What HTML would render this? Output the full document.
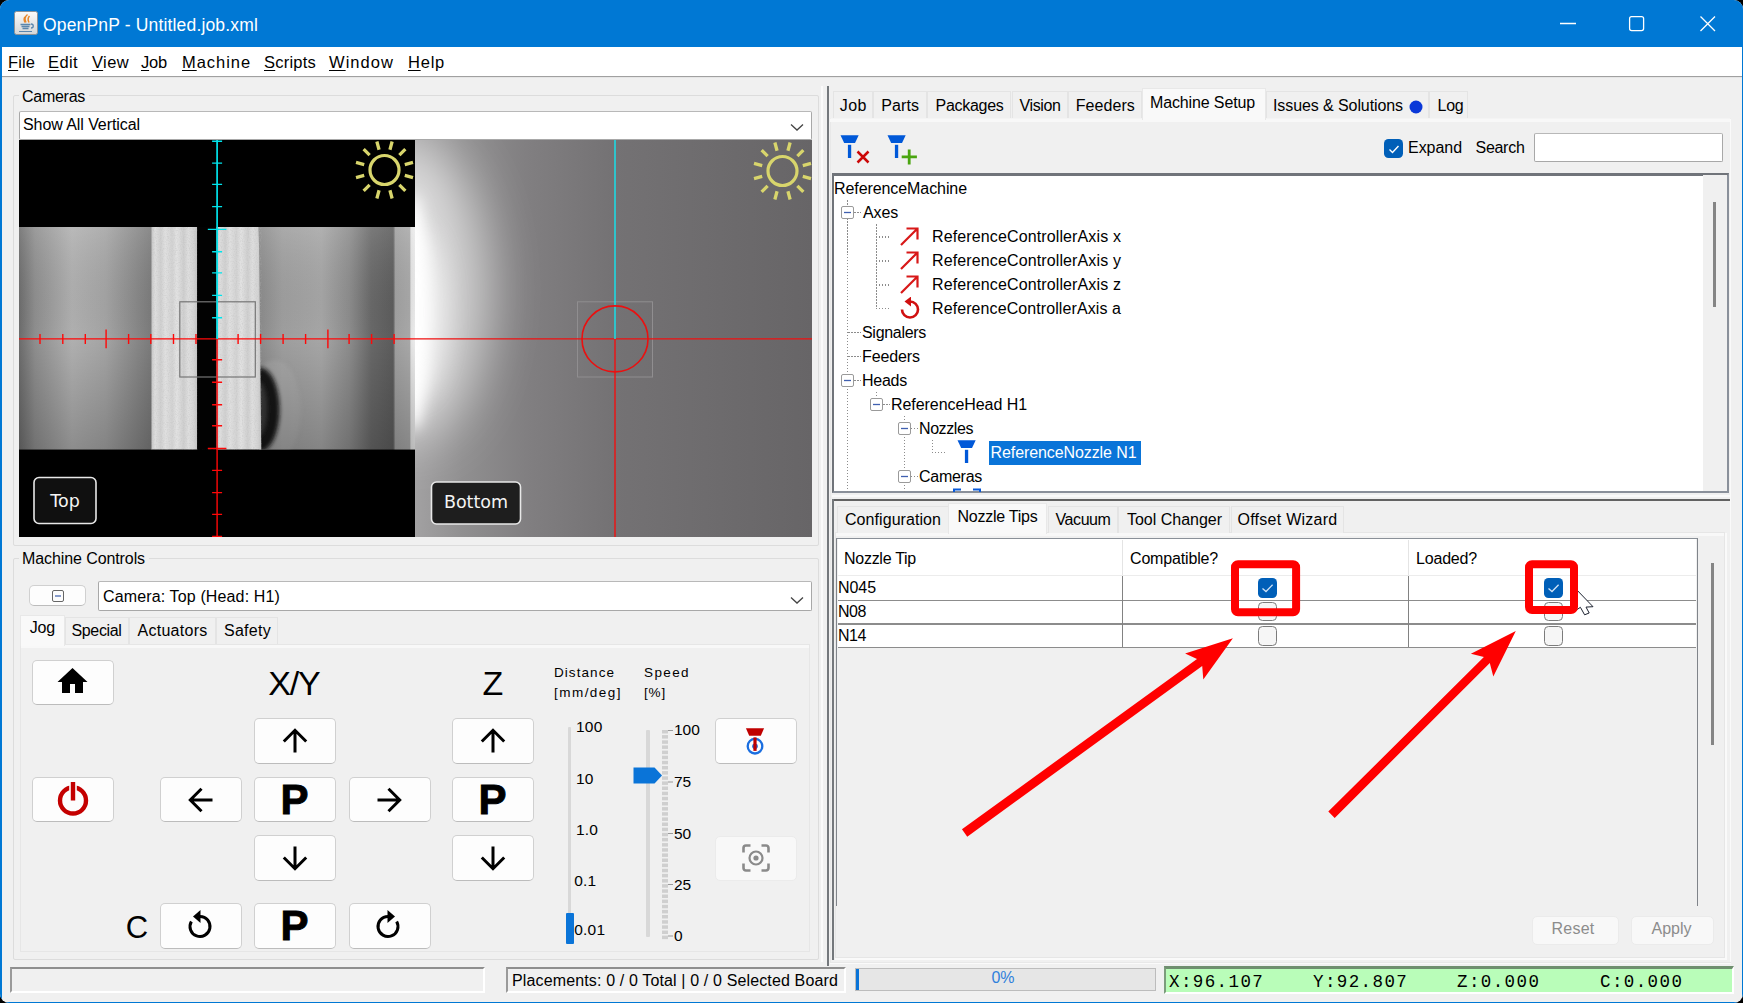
<!DOCTYPE html>
<html><head><meta charset="utf-8"><title>OpenPnP - Untitled.job.xml</title>
<style>
html,body{margin:0;padding:0;background:#000;}
body{width:1743px;height:1003px;overflow:hidden;position:relative;font-family:"Liberation Sans",sans-serif;font-size:16px;color:#000;}
#win{position:absolute;left:0;top:0;width:1743px;height:1003px;background:#f0f0f0;border-radius:9px;overflow:hidden;}
#win div,#win svg,#win span.t{position:absolute;box-sizing:border-box;}
span.t{white-space:pre;}
u{text-decoration:underline;text-underline-offset:2px;}
.btn{background:#fdfdfd;border:1px solid #d0d0d0;border-bottom-color:#bcbcbc;border-radius:5px;}
.btnd{background:#f8f8f8;border:1px solid #ebebeb;border-radius:5px;}
.tab{background:#f0f0f0;border:1px solid #e4e4e4;border-bottom:none;}
.tabs{background:#f9f9f9;border:1px solid #e8e8e8;border-bottom:none;}
.cb{background:#f6f6f6;border:1.4px solid #7c7c7c;border-radius:4.5px;}
.cbc{background:#005fb8;border-radius:4.5px;}
</style></head>
<body><div id="win">
<div style="left:0px;top:0px;width:1743px;height:47px;background:#0078d4;"></div>
<svg style="left:14px;top:11px;" width="24" height="24" viewBox="0 0 24 24"><defs><linearGradient id="jg" x1="0" y1="0" x2="0" y2="1"><stop offset="0" stop-color="#fafafa"/><stop offset="1" stop-color="#d4d6d8"/></linearGradient></defs>
<rect x="0.5" y="0.5" width="23" height="23" rx="2" fill="url(#jg)" stroke="#8d9297"/>
<path d="M13.5 3.5c-3 2.5-3.5 4.5-1.5 8M15.5 5c-2 2-2 3.500-0.500 6.500M11 6c-1.500 2-1 3.500 0 5.500" stroke="#e8872a" stroke-width="1.500" fill="none"/>
<path d="M6.500 13.500h10M7.500 15.500h8M8.500 17.500h6" stroke="#5b86ad" stroke-width="1.300"/>
<path d="M17 13c3 0 3 4 0 4" stroke="#5b86ad" stroke-width="1.300" fill="none"/>
<path d="M5 20.500h13" stroke="#5b86ad" stroke-width="1.200"/></svg>
<span class="t" style="left:43.0px;top:16.7px;font-size:17.5px;line-height:17.5px;letter-spacing:0.163px;color:#fff;">OpenPnP - Untitled.job.xml</span>
<svg style="left:1550px;top:8px;" width="180" height="32" viewBox="0 0 180 32"><path d="M10 15.500h16" stroke="#fff" stroke-width="1.300"/>
<rect x="79.600" y="8.600" width="14" height="14" rx="2" fill="none" stroke="#fff" stroke-width="1.300"/>
<path d="M150.500 8.500l14.500 14.500M165 8.500l-14.500 14.500" stroke="#fff" stroke-width="1.300"/></svg>
<div style="left:2px;top:47px;width:1739.5px;height:29px;background:#fff;"></div>
<div style="left:2px;top:76px;width:1739.5px;height:1px;background:#a0a0a0;"></div>
<div style="left:2px;top:77px;width:1739.5px;height:1px;background:#e6e6e6;"></div>
<span class="t" style="left:8.0px;top:53.9px;font-size:16.5px;line-height:16.5px;letter-spacing:0.104px;"><u>F</u>ile</span>
<span class="t" style="left:48.0px;top:53.9px;font-size:16.5px;line-height:16.5px;letter-spacing:0.392px;"><u>E</u>dit</span>
<span class="t" style="left:92.0px;top:53.9px;font-size:16.5px;line-height:16.5px;letter-spacing:0.384px;"><u>V</u>iew</span>
<span class="t" style="left:141.0px;top:53.9px;font-size:16.5px;line-height:16.5px;letter-spacing:-0.201px;"><u>J</u>ob</span>
<span class="t" style="left:182.0px;top:53.9px;font-size:16.5px;line-height:16.5px;letter-spacing:0.948px;"><u>M</u>achine</span>
<span class="t" style="left:264.0px;top:53.9px;font-size:16.5px;line-height:16.5px;letter-spacing:0.225px;"><u>S</u>cripts</span>
<span class="t" style="left:329.0px;top:53.9px;font-size:16.5px;line-height:16.5px;letter-spacing:1.053px;"><u>W</u>indow</span>
<span class="t" style="left:408.0px;top:53.9px;font-size:16.5px;line-height:16.5px;letter-spacing:0.766px;"><u>H</u>elp</span>
<div style="left:0px;top:47px;width:2px;height:956px;background:#0078d4;"></div>
<div style="left:1741.5px;top:47px;width:1.5px;height:956px;background:#0078d4;"></div>
<div style="left:0px;top:1001.5px;width:1743px;height:1.5px;background:#0078d4;"></div>
<div style="left:13px;top:95px;width:806px;height:451px;border:1px solid #dcdcdc;border-radius:2px;"></div>
<div style="left:19px;top:88px;width:70px;height:16px;background:#f0f0f0;"></div>
<span class="t" style="left:22.0px;top:88.7px;font-size:16px;line-height:16px;letter-spacing:-0.272px;">Cameras</span>
<div style="left:19px;top:111px;width:793px;height:29px;background:#fff;border:1px solid #a8a8a8;border-top-color:#b8b8b8;border-radius:2px;"></div>
<span class="t" style="left:23.0px;top:117.2px;font-size:16px;line-height:16px;letter-spacing:-0.075px;">Show All Vertical</span>
<svg style="left:789px;top:122.3px;" width="16" height="10" viewBox="0 0 16 10"><path d="M2 2.500l6 5.500l6-5.500" fill="none" stroke="#444" stroke-width="1.300"/></svg>
<svg style="left:19px;top:140px;" width="793" height="397" viewBox="0 0 793 397"><defs>
<linearGradient id="tl" x1="0" x2="1"><stop offset="0" stop-color="#6c6c6c"/><stop offset="0.120" stop-color="#8e8e8e"/><stop offset="0.400" stop-color="#b0b0b0"/><stop offset="0.650" stop-color="#a4a4a4"/><stop offset="0.900" stop-color="#868686"/><stop offset="1" stop-color="#7a7a7a"/></linearGradient>
<linearGradient id="tr" x1="0" x2="1"><stop offset="0" stop-color="#8a8a8a"/><stop offset="0.150" stop-color="#9e9e9e"/><stop offset="0.400" stop-color="#a6a6a6"/><stop offset="0.580" stop-color="#8c8c8c"/><stop offset="0.720" stop-color="#686868"/><stop offset="0.860" stop-color="#5c5c5c"/><stop offset="0.875" stop-color="#a0a0a0"/><stop offset="0.965" stop-color="#a8a8a8"/><stop offset="0.975" stop-color="#e4e4e4"/><stop offset="1" stop-color="#ececec"/></linearGradient>
<linearGradient id="vg" x1="0" x2="0" y1="0" y2="1"><stop offset="0" stop-color="#fff" stop-opacity="0.120"/><stop offset="0.500" stop-color="#000" stop-opacity="0"/><stop offset="1" stop-color="#000" stop-opacity="0.200"/></linearGradient>
<linearGradient id="st" x1="0" x2="1"><stop offset="0" stop-color="#c6c6c6"/><stop offset="0.080" stop-color="#dedede"/><stop offset="0.200" stop-color="#cfcfcf"/><stop offset="0.300" stop-color="#e0e0e0"/><stop offset="0.450" stop-color="#d2d2d2"/><stop offset="0.550" stop-color="#e2e2e2"/><stop offset="0.700" stop-color="#cecece"/><stop offset="0.800" stop-color="#dedede"/><stop offset="0.920" stop-color="#d4d4d4"/><stop offset="1" stop-color="#c2c2c2"/></linearGradient>
<linearGradient id="bg" x1="0" x2="1"><stop offset="0" stop-color="#a2a1a2"/><stop offset="0.120" stop-color="#908f90"/><stop offset="0.280" stop-color="#817f81"/><stop offset="0.500" stop-color="#747274"/><stop offset="1" stop-color="#676567"/></linearGradient>
<filter id="bf" x="-50%" y="-50%" width="200%" height="200%"><feGaussianBlur stdDeviation="26"/></filter>
<filter id="bf2" x="-50%" y="-50%" width="200%" height="200%"><feGaussianBlur stdDeviation="7"/></filter>
<filter id="bf3" x="-50%" y="-50%" width="200%" height="200%"><feGaussianBlur stdDeviation="12"/></filter>
<filter id="f2" x="-30%" y="-30%" width="160%" height="160%"><feGaussianBlur stdDeviation="2.200"/></filter>
<filter id="nz" x="0" y="0" width="100%" height="100%"><feTurbulence type="fractalNoise" baseFrequency="0.850" numOctaves="2" seed="3" result="n"/><feColorMatrix in="n" type="matrix" values="0 0 0 0 0.5  0 0 0 0 0.5  0 0 0 0 0.5  1.6 0 0 0 -0.700"/><feComposite in2="SourceGraphic" operator="in"/></filter>
<clipPath id="cpb"><rect x="396" y="0" width="397" height="397"/></clipPath>
<clipPath id="cpt"><rect x="0" y="0" width="396" height="397"/></clipPath>
<clipPath id="cpm"><rect x="0" y="87" width="396" height="222.500"/></clipPath>
</defs>
<rect x="0" y="0" width="396" height="397" fill="#000"/>
<rect x="0" y="87" width="133" height="222.500" fill="url(#tl)"/>
<rect x="240" y="87" width="156" height="222.500" fill="url(#tr)"/>
<g clip-path="url(#cpm)"><ellipse cx="256" cy="270" rx="26" ry="50" fill="#b4b4b4" opacity="0.350" filter="url(#f2)"/><ellipse cx="241" cy="269.500" rx="19.500" ry="42" fill="#161616" filter="url(#f2)"/><ellipse cx="240" cy="269" rx="8" ry="27" fill="#3a3a3a" filter="url(#f2)"/></g>
<rect x="0" y="87" width="396" height="222.500" fill="url(#vg)"/>
<rect x="132.500" y="87" width="46" height="222.500" fill="url(#st)"/>
<rect x="178.300" y="87" width="19" height="222.500" fill="#020202"/>
<path d="M197.300 87h42.500l2.500 222.500h-45z" fill="url(#st)"/>
<rect x="132.500" y="87" width="110" height="222.500" fill="#fff" filter="url(#nz)" opacity="0.550"/>
<rect x="178.300" y="87" width="19" height="222.500" fill="#020202"/>
<rect x="396" y="0" width="397" height="397" fill="url(#bg)"/>
<g clip-path="url(#cpb)"><ellipse cx="390" cy="150" rx="78" ry="150" fill="#fff" opacity="0.620" filter="url(#bf)"/><ellipse cx="395" cy="172" rx="15" ry="118" fill="#fff" filter="url(#bf2)"/><ellipse cx="396" cy="172" rx="30" ry="85" fill="#fff" opacity="0.600" filter="url(#bf3)"/></g>
<g clip-path="url(#cpt)">
<rect x="160.800" y="161.800" width="75.500" height="75.200" fill="none" stroke="#767676" stroke-width="1.200"/>
<path d="M0 198.9H396M198.1 198.9V397" stroke="#ff0808" stroke-width="1.400" fill="none"/>
<path d="M21.0 193.9V203.9M43.8 193.9V203.9M66.3 193.9V203.9M87.1 189.6V208.2M109.6 193.9V203.9M131.8 193.9V203.9M154.5 193.9V203.9M177.0 193.9V203.9M219.1 193.9V203.9M241.6 193.9V203.9M264.1 193.9V203.9M286.6 193.9V203.9M308.9 189.6V208.2M330.1 193.9V203.9M352.6 193.9V203.9M375.1 193.9V203.9M193.1 219.7H203.1M193.1 242.2H203.1M193.1 264.7H203.1M193.1 285.7H203.1M188.8 308.5H207.4M193.1 330.4H203.1M193.1 352.6H203.1M193.1 374.4H203.1M193.1 396.4H203.1" stroke="#ff0808" stroke-width="1.400" fill="none"/>
<path d="M198.1 0V198.9" stroke="#00e4ec" stroke-width="1.700" fill="none"/>
<path d="M193.1 1.3H203.1M193.1 23.1H203.1M193.1 44.4H203.1M193.1 66.6H203.1M188.8 89.4H207.4M193.1 111.8H203.1M193.1 132.9H203.1M193.1 155.4H203.1M193.1 177.8H203.1" stroke="#00e4ec" stroke-width="1.400" fill="none"/>
<g transform="translate(365.500 30)"><circle r="14.500" fill="none" stroke="#d8d56c" stroke-width="3.200"/><g stroke="#d8d56c" stroke-width="3.300" transform="rotate(15)">
<path d="M0 -21v-8.500M0 21v8.500M21 0h8.500M-21 0h-8.500"/><path d="M0 -21v-8.500M0 21v8.500M21 0h8.500M-21 0h-8.500" transform="rotate(30)"/><path d="M0 -21v-8.500M0 21v8.500M21 0h8.500M-21 0h-8.500" transform="rotate(60)"/></g></g>
<rect x="15" y="337.500" width="62" height="46" rx="5" fill="#101010" stroke="#e8e8e8" stroke-width="1.600"/>
</g>
<g clip-path="url(#cpb)">
<rect x="558.500" y="161.800" width="75" height="75.200" fill="none" stroke="#908e90" stroke-width="1"/>
<path d="M396 198.9H793M596 198.9V397" stroke="#f01010" stroke-width="1.400" fill="none"/>
<path d="M596 0V198.9" stroke="#18e0e8" stroke-width="1.500" fill="none"/>
<circle cx="596" cy="198.9" r="33" fill="none" stroke="#ea1010" stroke-width="1.600"/>
<g transform="translate(763.500 31)"><circle r="14.500" fill="none" stroke="#d8d56c" stroke-width="3.200"/><g stroke="#d8d56c" stroke-width="3.300" transform="rotate(15)">
<path d="M0 -21v-8.500M0 21v8.500M21 0h8.500M-21 0h-8.500"/><path d="M0 -21v-8.500M0 21v8.500M21 0h8.500M-21 0h-8.500" transform="rotate(30)"/><path d="M0 -21v-8.500M0 21v8.500M21 0h8.500M-21 0h-8.500" transform="rotate(60)"/></g></g>
<rect x="412.500" y="342" width="89" height="42" rx="5" fill="#1e1e1e" stroke="#e8e8e8" stroke-width="1.600"/>
</g>
<text x="46" y="367" font-size="17.500" fill="#f4f4f4" text-anchor="middle" font-family="'DejaVu Sans','Liberation Sans',sans-serif">Top</text>
<text x="457" y="368" font-size="17.500" fill="#f4f4f4" text-anchor="middle" font-family="'DejaVu Sans','Liberation Sans',sans-serif">Bottom</text>
</svg>
<div style="left:13px;top:558px;width:806px;height:401.5px;border:1px solid #dcdcdc;border-radius:2px;"></div>
<div style="left:19px;top:550px;width:130px;height:16px;background:#f0f0f0;"></div>
<span class="t" style="left:22.0px;top:551.2px;font-size:16px;line-height:16px;letter-spacing:-0.094px;">Machine Controls</span>
<div class="btn" style="left:29.3px;top:584.8px;width:57.2px;height:21.4px;border-radius:5px;"></div>
<svg style="left:51px;top:589px;" width="14" height="14" viewBox="0 0 14 14"><rect x="1.500" y="1.500" width="11" height="11" rx="1.500" fill="none" stroke="#666" stroke-width="1"/><path d="M4 7h6" stroke="#4a68b0" stroke-width="1.300"/></svg>
<div style="left:98px;top:581px;width:714px;height:30px;background:#fff;border:1px solid #a8a8a8;border-top-color:#b8b8b8;border-radius:2px;"></div>
<span class="t" style="left:103.0px;top:588.8px;font-size:16px;line-height:16px;letter-spacing:0.136px;">Camera: Top (Head: H1)</span>
<svg style="left:789px;top:594.5px;" width="16" height="10" viewBox="0 0 16 10"><path d="M2 2.500l6 5.500l6-5.500" fill="none" stroke="#444" stroke-width="1.300"/></svg>
<div style="left:20px;top:644px;width:790px;height:308px;background:#f0f0f0;border:1px solid #e6e6e6;"></div>
<div style="left:21px;top:645px;width:788px;height:3px;background:#f8f8f8;"></div>
<div class="tab" style="left:64.5px;top:617px;width:64.5px;height:27px;"></div>
<div class="tab" style="left:129px;top:617px;width:87px;height:27px;"></div>
<div class="tab" style="left:216px;top:617px;width:61.5px;height:27px;"></div>
<div class="tabs" style="left:20px;top:615px;width:44.5px;height:31px;"></div>
<span class="t" style="left:29.8px;top:619.7px;font-size:16px;line-height:16px;letter-spacing:-0.266px;">Jog</span>
<span class="t" style="left:71.5px;top:623.2px;font-size:16px;line-height:16px;letter-spacing:-0.354px;">Special</span>
<span class="t" style="left:137.5px;top:623.2px;font-size:16px;line-height:16px;letter-spacing:0.268px;">Actuators</span>
<span class="t" style="left:224.0px;top:623.2px;font-size:16px;line-height:16px;letter-spacing:0.273px;">Safety</span>
<div class="btn" style="left:32px;top:659.8px;width:82px;height:45.5px;"></div>
<div class="btn" style="left:32px;top:776.8px;width:82px;height:45.5px;"></div>
<div class="btn" style="left:254px;top:718px;width:82px;height:45.5px;"></div>
<div class="btn" style="left:159.8px;top:776.8px;width:82px;height:45.5px;"></div>
<div class="btn" style="left:254px;top:776.8px;width:82px;height:45.5px;"></div>
<div class="btn" style="left:348.8px;top:776.8px;width:82px;height:45.5px;"></div>
<div class="btn" style="left:254px;top:835.3px;width:82px;height:45.5px;"></div>
<div class="btn" style="left:452px;top:718px;width:82px;height:45.5px;"></div>
<div class="btn" style="left:452px;top:776.8px;width:82px;height:45.5px;"></div>
<div class="btn" style="left:452px;top:835.3px;width:82px;height:45.5px;"></div>
<div class="btn" style="left:159.8px;top:903.2px;width:82px;height:45.5px;"></div>
<div class="btn" style="left:254px;top:903.2px;width:82px;height:45.5px;"></div>
<div class="btn" style="left:348.8px;top:903.2px;width:82px;height:45.5px;"></div>
<div class="btn" style="left:714.8px;top:718px;width:82px;height:45.5px;"></div>
<div class="btnd" style="left:715px;top:835.5px;width:82px;height:45.5px;"></div>
<svg style="left:56px;top:665px;" width="34" height="32" viewBox="0 0 34 32"><path d="M16.500 3L1.500 17h4.500v11h8v-9h5v9h8V17h4.500z" fill="#000"/></svg>
<svg style="left:54.5px;top:781px;" width="36" height="36" viewBox="0 0 36 36"><circle cx="18" cy="19.500" r="13" fill="none" stroke="#c40000" stroke-width="4.400"/><path d="M18 0v19.500" stroke="#fdfdfd" stroke-width="7.600"/><path d="M18 1v18.500" stroke="#c40000" stroke-width="4.400"/></svg>
<svg style="left:278.5px;top:725px;" width="32" height="32" viewBox="0 0 32 32"><g transform="rotate(0 16 16)"><path d="M16 27.500V5.500M4.800 16.500L16 5.300L27.200 16.500" fill="none" stroke="#000" stroke-width="3"/></g></svg>
<svg style="left:278.5px;top:842px;" width="32" height="32" viewBox="0 0 32 32"><g transform="rotate(180 16 16)"><path d="M16 27.500V5.500M4.800 16.500L16 5.300L27.200 16.500" fill="none" stroke="#000" stroke-width="3"/></g></svg>
<svg style="left:184.5px;top:783.5px;" width="32" height="32" viewBox="0 0 32 32"><g transform="rotate(-90 16 16)"><path d="M16 27.500V5.500M4.800 16.500L16 5.300L27.200 16.500" fill="none" stroke="#000" stroke-width="3"/></g></svg>
<svg style="left:373px;top:783.5px;" width="32" height="32" viewBox="0 0 32 32"><g transform="rotate(90 16 16)"><path d="M16 27.500V5.500M4.800 16.500L16 5.300L27.200 16.500" fill="none" stroke="#000" stroke-width="3"/></g></svg>
<svg style="left:476.5px;top:725px;" width="32" height="32" viewBox="0 0 32 32"><g transform="rotate(0 16 16)"><path d="M16 27.500V5.500M4.800 16.500L16 5.300L27.200 16.500" fill="none" stroke="#000" stroke-width="3"/></g></svg>
<svg style="left:476.5px;top:842px;" width="32" height="32" viewBox="0 0 32 32"><g transform="rotate(180 16 16)"><path d="M16 27.500V5.500M4.800 16.500L16 5.300L27.200 16.500" fill="none" stroke="#000" stroke-width="3"/></g></svg>
<span class="t" style="left:280.5px;top:779.0px;font-size:42px;line-height:42px;font-weight:bold;-webkit-text-stroke:0.9px #000;">P</span>
<span class="t" style="left:478.5px;top:779.0px;font-size:42px;line-height:42px;font-weight:bold;-webkit-text-stroke:0.9px #000;">P</span>
<span class="t" style="left:280.5px;top:905.0px;font-size:42px;line-height:42px;font-weight:bold;-webkit-text-stroke:0.9px #000;">P</span>
<span class="t" style="left:268.2px;top:666.4px;font-size:34px;line-height:34px;letter-spacing:-1.101px;">X/Y</span>
<span class="t" style="left:482.6px;top:666.4px;font-size:34px;line-height:34px;">Z</span>
<span class="t" style="left:125.8px;top:911.9px;font-size:31px;line-height:31px;">C</span>
<svg style="left:184.2px;top:909px;" width="32" height="32" viewBox="0 0 32 32"><g transform="translate(0 0) scale(1 1)"><path d="M16 7.500A10 10 0 1 1 7.340 12.500" fill="none" stroke="#000" stroke-width="3"/><path d="M16.500 1v13l-7.500-6.500z" fill="#000"/></g></svg>
<svg style="left:372.3px;top:909px;" width="32" height="32" viewBox="0 0 32 32"><g transform="translate(32 0) scale(-1 1)"><path d="M16 7.500A10 10 0 1 1 7.340 12.500" fill="none" stroke="#000" stroke-width="3"/><path d="M16.500 1v13l-7.500-6.500z" fill="#000"/></g></svg>
<span class="t" style="left:554.0px;top:665.9px;font-size:13.5px;line-height:13.5px;letter-spacing:1.060px;">Distance</span>
<span class="t" style="left:554.0px;top:686.4px;font-size:13.5px;line-height:13.5px;letter-spacing:1.467px;">[mm/deg]</span>
<span class="t" style="left:644.0px;top:665.9px;font-size:13.5px;line-height:13.5px;letter-spacing:1.393px;">Speed</span>
<span class="t" style="left:644.0px;top:686.4px;font-size:13.5px;line-height:13.5px;letter-spacing:0.832px;">[%]</span>
<div style="left:567.7px;top:727px;width:3.6px;height:200px;background:#d8d8d8;border-radius:1px;"></div>
<div style="left:566px;top:913px;width:8px;height:31px;background:#0a74d8;border-radius:1px;"></div>
<span class="t" style="left:576.0px;top:719.4px;font-size:15.5px;line-height:15.5px;letter-spacing:0.2px;">100</span>
<span class="t" style="left:576.0px;top:770.9px;font-size:15.5px;line-height:15.5px;letter-spacing:0.2px;">10</span>
<span class="t" style="left:576.0px;top:821.9px;font-size:15.5px;line-height:15.5px;letter-spacing:0.2px;">1.0</span>
<span class="t" style="left:574.3px;top:872.9px;font-size:15.5px;line-height:15.5px;letter-spacing:0.2px;">0.1</span>
<span class="t" style="left:574.3px;top:922.4px;font-size:15.5px;line-height:15.5px;letter-spacing:0.2px;">0.01</span>
<div style="left:646px;top:729.5px;width:3.8px;height:207.5px;background:#d8d8d8;border-radius:1px;"></div>
<svg style="left:633px;top:767px;" width="30" height="18" viewBox="0 0 30 18"><path d="M0.500 0.500h21l7.500 8l-7.500 8h-21z" fill="#0a74d8"/></svg>
<svg style="left:662px;top:730px;" width="12" height="212" viewBox="0 0 12 212"><rect x="0" y="0.0" width="6" height="3.500" fill="#cfcfcf"/><rect x="0" y="5.1" width="6" height="3.500" fill="#cfcfcf"/><rect x="0" y="10.3" width="6" height="3.500" fill="#cfcfcf"/><rect x="0" y="15.4" width="6" height="3.500" fill="#cfcfcf"/><rect x="0" y="20.6" width="6" height="3.500" fill="#cfcfcf"/><rect x="0" y="25.7" width="6" height="3.500" fill="#cfcfcf"/><rect x="0" y="30.8" width="6" height="3.500" fill="#cfcfcf"/><rect x="0" y="36.0" width="6" height="3.500" fill="#cfcfcf"/><rect x="0" y="41.1" width="6" height="3.500" fill="#cfcfcf"/><rect x="0" y="46.3" width="6" height="3.500" fill="#cfcfcf"/><rect x="0" y="51.4" width="6" height="3.500" fill="#cfcfcf"/><rect x="0" y="56.5" width="6" height="3.500" fill="#cfcfcf"/><rect x="0" y="61.7" width="6" height="3.500" fill="#cfcfcf"/><rect x="0" y="66.8" width="6" height="3.500" fill="#cfcfcf"/><rect x="0" y="72.0" width="6" height="3.500" fill="#cfcfcf"/><rect x="0" y="77.1" width="6" height="3.500" fill="#cfcfcf"/><rect x="0" y="82.2" width="6" height="3.500" fill="#cfcfcf"/><rect x="0" y="87.4" width="6" height="3.500" fill="#cfcfcf"/><rect x="0" y="92.5" width="6" height="3.500" fill="#cfcfcf"/><rect x="0" y="97.7" width="6" height="3.500" fill="#cfcfcf"/><rect x="0" y="102.8" width="6" height="3.500" fill="#cfcfcf"/><rect x="0" y="107.9" width="6" height="3.500" fill="#cfcfcf"/><rect x="0" y="113.1" width="6" height="3.500" fill="#cfcfcf"/><rect x="0" y="118.2" width="6" height="3.500" fill="#cfcfcf"/><rect x="0" y="123.4" width="6" height="3.500" fill="#cfcfcf"/><rect x="0" y="128.5" width="6" height="3.500" fill="#cfcfcf"/><rect x="0" y="133.6" width="6" height="3.500" fill="#cfcfcf"/><rect x="0" y="138.8" width="6" height="3.500" fill="#cfcfcf"/><rect x="0" y="143.9" width="6" height="3.500" fill="#cfcfcf"/><rect x="0" y="149.1" width="6" height="3.500" fill="#cfcfcf"/><rect x="0" y="154.2" width="6" height="3.500" fill="#cfcfcf"/><rect x="0" y="159.3" width="6" height="3.500" fill="#cfcfcf"/><rect x="0" y="164.5" width="6" height="3.500" fill="#cfcfcf"/><rect x="0" y="169.6" width="6" height="3.500" fill="#cfcfcf"/><rect x="0" y="174.8" width="6" height="3.500" fill="#cfcfcf"/><rect x="0" y="179.9" width="6" height="3.500" fill="#cfcfcf"/><rect x="0" y="185.0" width="6" height="3.500" fill="#cfcfcf"/><rect x="0" y="190.2" width="6" height="3.500" fill="#cfcfcf"/><rect x="0" y="195.3" width="6" height="3.500" fill="#cfcfcf"/><rect x="0" y="200.5" width="6" height="3.500" fill="#cfcfcf"/><rect x="0" y="205.6" width="6" height="3.500" fill="#cfcfcf"/><path d="M6 0.500h5M6 52h5M6 103.500h5M6 154.500h5M6 206h5" stroke="#9a9a9a" stroke-width="1"/></svg>
<span class="t" style="left:674.0px;top:722.4px;font-size:15.5px;line-height:15.5px;">100</span>
<span class="t" style="left:674.0px;top:774.4px;font-size:15.5px;line-height:15.5px;">75</span>
<span class="t" style="left:674.0px;top:825.9px;font-size:15.5px;line-height:15.5px;">50</span>
<span class="t" style="left:674.0px;top:876.9px;font-size:15.5px;line-height:15.5px;">25</span>
<span class="t" style="left:674.0px;top:928.4px;font-size:15.5px;line-height:15.5px;">0</span>
<svg style="left:739px;top:725px;" width="32" height="32" viewBox="0 0 32 32"><circle cx="16" cy="21.200" r="7.300" fill="none" stroke="#1a6ee0" stroke-width="2.300"/><circle cx="16" cy="21.200" r="2.800" fill="#1a6ee0"/><path d="M6.900 3.300h18.200l-3.300 7.500h-11.600z" fill="#c00000"/><rect x="14.400" y="12.400" width="3.200" height="13.500" fill="#c00000"/></svg>
<svg style="left:739.5px;top:841.5px;" width="32" height="32" viewBox="0 0 32 32"><path d="M3.500 10.500V6a2.500 2.500 0 0 1 2.500-2.500H10.500M21.500 3.500H26a2.500 2.500 0 0 1 2.500 2.500V10.500M28.500 21.500V26a2.500 2.500 0 0 1-2.500 2.500H21.500M10.500 28.500H6a2.500 2.500 0 0 1-2.500-2.500V21.500" fill="none" stroke="#8a8a8a" stroke-width="2.600"/><circle cx="16" cy="16" r="6.500" fill="none" stroke="#8a8a8a" stroke-width="2.200"/><circle cx="16" cy="16" r="2.600" fill="#8a8a8a"/></svg>
<div style="left:821px;top:86px;width:1.6px;height:876px;background:#fafafa;"></div>
<div style="left:826.7px;top:86px;width:2px;height:879.5px;background:#74787c;"></div>
<div style="left:10px;top:967px;width:475px;height:26px;background:#f0f0f0;border:2px solid #8e8e8e;border-left-color:#9a9a9a;border-right-color:#fff;border-bottom-color:#fff;"></div>
<div style="left:506px;top:967px;width:340px;height:26px;background:#f0f0f0;border:2px solid #8e8e8e;border-left-color:#9a9a9a;border-right-color:#fff;border-bottom-color:#fff;"></div>
<span class="t" style="left:512.0px;top:972.7px;font-size:16px;line-height:16px;letter-spacing:0.139px;">Placements: 0 / 0 Total | 0 / 0 Selected Board</span>
<div style="left:855px;top:968px;width:301px;height:23px;background:#e6e6e6;border:1px solid #bcbcbc;"></div>
<div style="left:856px;top:969px;width:3px;height:21px;background:#0a74d8;"></div>
<span class="t" style="left:991.4px;top:970.2px;font-size:16px;line-height:16px;color:#2f80dc;">0%</span>
<div style="left:1164px;top:966px;width:570px;height:28px;background:#b9fdb9;border:2px solid #fff;border-top:3px solid #6f8f6f;border-left:2px solid #7c9c7c;"></div>
<span class="t" style="left:1169.0px;top:973.8px;font-size:17.5px;line-height:17.5px;font-family:'Liberation Mono',monospace;letter-spacing:1.4px;">X:96.107</span>
<span class="t" style="left:1313.0px;top:973.8px;font-size:17.5px;line-height:17.5px;font-family:'Liberation Mono',monospace;letter-spacing:1.4px;">Y:92.807</span>
<span class="t" style="left:1457.0px;top:973.8px;font-size:17.5px;line-height:17.5px;font-family:'Liberation Mono',monospace;letter-spacing:1.4px;">Z:0.000</span>
<span class="t" style="left:1600.0px;top:973.8px;font-size:17.5px;line-height:17.5px;font-family:'Liberation Mono',monospace;letter-spacing:1.4px;">C:0.000</span>
<div style="left:829.5px;top:118px;width:901.5px;height:845px;background:#f0f0f0;border:1px solid #e8e8e8;border-top-color:#f4f4f4;"></div>
<div style="left:830px;top:119px;width:900px;height:2.5px;background:#f8f8f8;"></div>
<div class="tab" style="left:833px;top:91.3px;width:39.5px;height:26.5px;"></div>
<span class="t" style="left:839.8px;top:97.7px;font-size:16px;line-height:16px;letter-spacing:0.401px;">Job</span>
<div class="tab" style="left:873px;top:91.3px;width:53.5px;height:26.5px;"></div>
<span class="t" style="left:881.2px;top:97.7px;font-size:16px;line-height:16px;letter-spacing:0.131px;">Parts</span>
<div class="tab" style="left:927px;top:91.3px;width:84px;height:26.5px;"></div>
<span class="t" style="left:935.5px;top:97.7px;font-size:16px;line-height:16px;letter-spacing:-0.283px;">Packages</span>
<div class="tab" style="left:1011.5px;top:91.3px;width:56px;height:26.5px;"></div>
<span class="t" style="left:1019.5px;top:97.7px;font-size:16px;line-height:16px;letter-spacing:-0.382px;">Vision</span>
<div class="tab" style="left:1068px;top:91.3px;width:73.5px;height:26.5px;"></div>
<span class="t" style="left:1075.8px;top:97.7px;font-size:16px;line-height:16px;letter-spacing:0.044px;">Feeders</span>
<div class="tab" style="left:1266px;top:91.3px;width:162.5px;height:26.5px;"></div>
<span class="t" style="left:1273.0px;top:97.7px;font-size:16px;line-height:16px;letter-spacing:-0.090px;">Issues & Solutions</span>
<svg style="left:1408px;top:98.5px;" width="16" height="16" viewBox="0 0 16 16"><circle cx="8" cy="8" r="6.500" fill="#0a38d8"/></svg>
<div class="tab" style="left:1429px;top:91.3px;width:39px;height:26.5px;"></div>
<span class="t" style="left:1437.5px;top:97.7px;font-size:16px;line-height:16px;letter-spacing:-0.232px;">Log</span>
<div class="tabs" style="left:1141.5px;top:88.4px;width:124px;height:31.6px;"></div>
<span class="t" style="left:1150.0px;top:94.7px;font-size:16px;line-height:16px;letter-spacing:-0.133px;">Machine Setup</span>
<svg style="left:840px;top:135px;" width="32" height="30" viewBox="0 0 32 30"><path d="M0.500 0.300h18.200l-3.700 7.600h-10.800z" fill="#0058d8"/><rect x="7.900" y="9.800" width="3.300" height="13.200" fill="#0058d8"/><path d="M17.500 16.500l11 11M28.500 16.500l-11 11" stroke="#cc0808" stroke-width="2.500"/></svg>
<svg style="left:887px;top:135px;" width="32" height="30" viewBox="0 0 32 30"><path d="M0.500 0.300h18.200l-3.700 7.600h-10.800z" fill="#0058d8"/><rect x="7.900" y="9.800" width="3.300" height="13.200" fill="#0058d8"/><path d="M22.200 14.400v15.200M14.700 21.800h15.200" stroke="#4aa510" stroke-width="2.800"/></svg>
<div class="cbc" style="left:1383.5px;top:138.5px;width:19.5px;height:19.5px;"></div>
<svg style="left:1383.5px;top:138.5px;" width="20" height="20" viewBox="0 0 20 20"><path d="M5.500 10.500l3 3l6-6.500" fill="none" stroke="#fff" stroke-width="1.400"/></svg>
<span class="t" style="left:1408.0px;top:139.7px;font-size:16px;line-height:16px;letter-spacing:-0.044px;">Expand</span>
<span class="t" style="left:1475.5px;top:139.7px;font-size:16px;line-height:16px;letter-spacing:-0.283px;">Search</span>
<div style="left:1533.5px;top:132.5px;width:189px;height:29.5px;background:#fff;border:1px solid #a8a8a8;border-top-color:#b8b8b8;border-radius:2px;"></div>
<div style="left:832px;top:173px;width:897px;height:320px;background:#fff;border:2px solid #70747a;border-top-width:3px;border-right-color:#8a909a;border-bottom-color:#8a909a;"></div>
<div style="left:1703px;top:175px;width:24px;height:316px;background:#f0f0f0;"></div>
<div style="left:1713.4px;top:201.5px;width:3px;height:105px;background:#858585;"></div>
<span class="t" style="left:834.0px;top:180.7px;font-size:16px;line-height:16px;letter-spacing:-0.081px;">ReferenceMachine</span>
<div style="left:846.75px;top:200px;width:1.5px;height:292px;background-image:repeating-linear-gradient(180deg,#8c8c8c 0 1.5px,transparent 1.5px 3px);"></div>
<svg style="left:841px;top:206.0px;" width="13" height="13" viewBox="0 0 13 13"><rect x="0.500" y="0.500" width="12" height="12" rx="1.500" fill="#fff" stroke="#9a9a9a"/><path d="M3 6.500h7" stroke="#4060b0" stroke-width="1.300"/></svg>
<div style="left:854px;top:211.5px;width:7px;height:1.5px;background-image:repeating-linear-gradient(90deg,#8c8c8c 0 1.5px,transparent 1.5px 3px);"></div>
<span class="t" style="left:863.0px;top:204.7px;font-size:16px;line-height:16px;letter-spacing:-0.143px;">Axes</span>
<div style="left:875.75px;top:224px;width:1.5px;height:84px;background-image:repeating-linear-gradient(180deg,#8c8c8c 0 1.5px,transparent 1.5px 3px);"></div>
<div style="left:876px;top:236.0px;width:14px;height:1.5px;background-image:repeating-linear-gradient(90deg,#8c8c8c 0 1.5px,transparent 1.5px 3px);"></div>
<svg style="left:899px;top:225.5px;" width="22" height="22" viewBox="0 0 22 22"><path d="M2 19L18 3M7.500 2.500h11v11" fill="none" stroke="#d81818" stroke-width="2.200"/></svg>
<span class="t" style="left:932.0px;top:228.7px;font-size:16px;line-height:16px;letter-spacing:0.126px;">ReferenceControllerAxis x</span>
<div style="left:876px;top:260.0px;width:14px;height:1.5px;background-image:repeating-linear-gradient(90deg,#8c8c8c 0 1.5px,transparent 1.5px 3px);"></div>
<svg style="left:899px;top:249.5px;" width="22" height="22" viewBox="0 0 22 22"><path d="M2 19L18 3M7.500 2.500h11v11" fill="none" stroke="#d81818" stroke-width="2.200"/></svg>
<span class="t" style="left:932.0px;top:252.7px;font-size:16px;line-height:16px;letter-spacing:0.126px;">ReferenceControllerAxis y</span>
<div style="left:876px;top:284.0px;width:14px;height:1.5px;background-image:repeating-linear-gradient(90deg,#8c8c8c 0 1.5px,transparent 1.5px 3px);"></div>
<svg style="left:899px;top:273.5px;" width="22" height="22" viewBox="0 0 22 22"><path d="M2 19L18 3M7.500 2.500h11v11" fill="none" stroke="#d81818" stroke-width="2.200"/></svg>
<span class="t" style="left:932.0px;top:276.7px;font-size:16px;line-height:16px;letter-spacing:0.126px;">ReferenceControllerAxis z</span>
<div style="left:876px;top:307.5px;width:14px;height:1.5px;background-image:repeating-linear-gradient(90deg,#8c8c8c 0 1.5px,transparent 1.5px 3px);"></div>
<svg style="left:899px;top:297px;" width="22" height="22" viewBox="0 0 22 22"><path d="M11 4.500a8 8 0 1 1 -8 8" fill="none" stroke="#d01010" stroke-width="2.600"/><path d="M12 -0.500v10l-6.500-5z" fill="#d01010"/></svg>
<span class="t" style="left:932.0px;top:300.7px;font-size:16px;line-height:16px;letter-spacing:0.090px;">ReferenceControllerAxis a</span>
<div style="left:848px;top:331.5px;width:13px;height:1.5px;background-image:repeating-linear-gradient(90deg,#8c8c8c 0 1.5px,transparent 1.5px 3px);"></div>
<span class="t" style="left:862.0px;top:324.7px;font-size:16px;line-height:16px;letter-spacing:-0.300px;">Signalers</span>
<div style="left:848px;top:355.5px;width:13px;height:1.5px;background-image:repeating-linear-gradient(90deg,#8c8c8c 0 1.5px,transparent 1.5px 3px);"></div>
<span class="t" style="left:862.0px;top:348.7px;font-size:16px;line-height:16px;letter-spacing:-0.099px;">Feeders</span>
<svg style="left:841px;top:374.0px;" width="13" height="13" viewBox="0 0 13 13"><rect x="0.500" y="0.500" width="12" height="12" rx="1.500" fill="#fff" stroke="#9a9a9a"/><path d="M3 6.500h7" stroke="#4060b0" stroke-width="1.300"/></svg>
<div style="left:854px;top:379.5px;width:7px;height:1.5px;background-image:repeating-linear-gradient(90deg,#8c8c8c 0 1.5px,transparent 1.5px 3px);"></div>
<span class="t" style="left:862.0px;top:372.7px;font-size:16px;line-height:16px;letter-spacing:-0.250px;">Heads</span>
<div style="left:875.75px;top:392px;width:1.5px;height:6px;background-image:repeating-linear-gradient(180deg,#8c8c8c 0 1.5px,transparent 1.5px 3px);"></div>
<svg style="left:869.5px;top:398.0px;" width="13" height="13" viewBox="0 0 13 13"><rect x="0.500" y="0.500" width="12" height="12" rx="1.500" fill="#fff" stroke="#9a9a9a"/><path d="M3 6.500h7" stroke="#4060b0" stroke-width="1.300"/></svg>
<div style="left:883px;top:403.5px;width:7px;height:1.5px;background-image:repeating-linear-gradient(90deg,#8c8c8c 0 1.5px,transparent 1.5px 3px);"></div>
<span class="t" style="left:891.0px;top:396.7px;font-size:16px;line-height:16px;letter-spacing:-0.061px;">ReferenceHead H1</span>
<div style="left:903.75px;top:416px;width:1.5px;height:76px;background-image:repeating-linear-gradient(180deg,#8c8c8c 0 1.5px,transparent 1.5px 3px);"></div>
<svg style="left:898px;top:422.0px;" width="13" height="13" viewBox="0 0 13 13"><rect x="0.500" y="0.500" width="12" height="12" rx="1.500" fill="#fff" stroke="#9a9a9a"/><path d="M3 6.500h7" stroke="#4060b0" stroke-width="1.300"/></svg>
<div style="left:911px;top:427.5px;width:7px;height:1.5px;background-image:repeating-linear-gradient(90deg,#8c8c8c 0 1.5px,transparent 1.5px 3px);"></div>
<span class="t" style="left:919.0px;top:420.7px;font-size:16px;line-height:16px;letter-spacing:-0.415px;">Nozzles</span>
<div style="left:931.75px;top:440px;width:1.5px;height:12px;background-image:repeating-linear-gradient(180deg,#8c8c8c 0 1.5px,transparent 1.5px 3px);"></div>
<div style="left:932px;top:451.5px;width:15px;height:1.5px;background-image:repeating-linear-gradient(90deg,#8c8c8c 0 1.5px,transparent 1.5px 3px);"></div>
<svg style="left:957px;top:440.3px;" width="20" height="24" viewBox="0 0 20 24"><path d="M0.500 0.300h18.200l-3.700 7.600h-10.800z" fill="#0058d8"/><rect x="7.900" y="9.800" width="3.300" height="13.200" fill="#0058d8"/></svg>
<div style="left:988.5px;top:440.5px;width:152px;height:24px;background:#0a74d8;"></div>
<span class="t" style="left:990.5px;top:444.7px;font-size:16px;line-height:16px;letter-spacing:-0.090px;color:#fff;">ReferenceNozzle N1</span>
<svg style="left:898px;top:470.0px;" width="13" height="13" viewBox="0 0 13 13"><rect x="0.500" y="0.500" width="12" height="12" rx="1.500" fill="#fff" stroke="#9a9a9a"/><path d="M3 6.500h7" stroke="#4060b0" stroke-width="1.300"/></svg>
<div style="left:911px;top:475.5px;width:7px;height:1.5px;background-image:repeating-linear-gradient(90deg,#8c8c8c 0 1.5px,transparent 1.5px 3px);"></div>
<span class="t" style="left:919.0px;top:468.7px;font-size:16px;line-height:16px;letter-spacing:-0.272px;">Cameras</span>
<div style="left:932px;top:490.5px;width:8px;height:1.5px;background-image:repeating-linear-gradient(90deg,#8c8c8c 0 1.5px,transparent 1.5px 3px);"></div>
<svg style="left:952px;top:488px;" width="30" height="4" viewBox="0 0 30 4"><path d="M2 4V1.500h7M28 4V1.500h-7" fill="none" stroke="#0a5ad8" stroke-width="2"/></svg>
<div style="left:832px;top:499px;width:898.5px;height:1.6px;background:#626262;"></div>
<div style="left:831.9px;top:499px;width:2px;height:460.5px;background:#74787c;"></div>
<div style="left:832px;top:495px;width:898px;height:1.5px;background:#fafafa;"></div>
<div style="left:834.8px;top:532px;width:890.2px;height:425.5px;background:#f0f0f0;border:1px solid #e6e6e6;"></div>
<div style="left:834.8px;top:957.5px;width:892px;height:2.4px;background:#fafafa;"></div>
<div style="left:835.8px;top:533px;width:888.2px;height:3px;background:#f8f8f8;"></div>
<div style="left:1729.6px;top:119px;width:1.6px;height:843px;background:#fafafa;"></div>
<div style="left:1725px;top:533px;width:2.4px;height:426px;background:#fafafa;"></div>
<div style="left:829.5px;top:962.5px;width:901px;height:1.6px;background:#fafafa;"></div>
<div class="tab" style="left:836.5px;top:506px;width:112px;height:26.5px;"></div>
<span class="t" style="left:845.0px;top:511.7px;font-size:16px;line-height:16px;letter-spacing:0.064px;">Configuration</span>
<div class="tab" style="left:1047.5px;top:506px;width:70px;height:26.5px;"></div>
<span class="t" style="left:1055.5px;top:511.7px;font-size:16px;line-height:16px;letter-spacing:-0.418px;">Vacuum</span>
<div class="tab" style="left:1118px;top:506px;width:112px;height:26.5px;"></div>
<span class="t" style="left:1127.0px;top:511.7px;font-size:16px;line-height:16px;letter-spacing:-0.014px;">Tool Changer</span>
<div class="tab" style="left:1230.5px;top:506px;width:113px;height:26.5px;"></div>
<span class="t" style="left:1237.5px;top:511.7px;font-size:16px;line-height:16px;letter-spacing:0.260px;">Offset Wizard</span>
<div class="tabs" style="left:948px;top:503px;width:99px;height:31px;"></div>
<span class="t" style="left:957.5px;top:508.7px;font-size:16px;line-height:16px;letter-spacing:-0.245px;">Nozzle Tips</span>
<div style="left:836px;top:538px;width:861.5px;height:367.5px;border:1.4px solid #80848a;border-bottom:none;border-top-color:#8a9098;"></div>
<div style="left:837.8px;top:539.4px;width:858.5px;height:36px;background:#fff;"></div>
<div style="left:1122px;top:540px;width:1px;height:35px;background:#e4e4e4;"></div>
<div style="left:1408px;top:540px;width:1px;height:35px;background:#e4e4e4;"></div>
<span class="t" style="left:844.0px;top:550.7px;font-size:16px;line-height:16px;letter-spacing:-0.270px;">Nozzle Tip</span>
<span class="t" style="left:1130.0px;top:550.7px;font-size:16px;line-height:16px;letter-spacing:-0.166px;">Compatible?</span>
<span class="t" style="left:1416.0px;top:550.7px;font-size:16px;line-height:16px;letter-spacing:-0.184px;">Loaded?</span>
<div style="left:837.8px;top:575.5px;width:858.5px;height:72.5px;background:#fff;"></div>
<div style="left:837.8px;top:599.5px;width:858.5px;height:1.4px;background:#8c8c8c;"></div>
<div style="left:837.8px;top:623.2px;width:858.5px;height:1.4px;background:#8c8c8c;"></div>
<div style="left:837.8px;top:646.8px;width:858.5px;height:1.4px;background:#8c8c8c;"></div>
<div style="left:837.8px;top:575px;width:858.5px;height:1px;background:#ececec;"></div>
<div style="left:1122px;top:576px;width:1.4px;height:71px;background:#828282;"></div>
<div style="left:1408px;top:576px;width:1.4px;height:71px;background:#828282;"></div>
<span class="t" style="left:838.0px;top:579.7px;font-size:16px;line-height:16px;letter-spacing:-0.062px;">N045</span>
<span class="t" style="left:838.0px;top:603.7px;font-size:16px;line-height:16px;letter-spacing:-0.451px;">N08</span>
<span class="t" style="left:838.0px;top:627.7px;font-size:16px;line-height:16px;letter-spacing:-0.451px;">N14</span>
<div class="cbc" style="left:1257.6px;top:578.2px;width:19.4px;height:19.6px;"></div>
<svg style="left:1257.6px;top:578.2px;" width="20" height="20" viewBox="0 0 20 20"><path d="M4.500 10.500l3.500 3l6.600-6.800" fill="none" stroke="#cfe2f6" stroke-width="1.300"/></svg>
<div class="cb" style="left:1257.6px;top:602.2px;width:19.4px;height:19.3px;"></div>
<div class="cb" style="left:1257.6px;top:626.4px;width:19.4px;height:19.3px;"></div>
<div class="cbc" style="left:1544.0px;top:578.2px;width:19.4px;height:19.6px;"></div>
<svg style="left:1544.0px;top:578.2px;" width="20" height="20" viewBox="0 0 20 20"><path d="M4.500 10.500l3.500 3l6.600-6.800" fill="none" stroke="#cfe2f6" stroke-width="1.300"/></svg>
<div class="cb" style="left:1544.0px;top:602.2px;width:19.4px;height:19.3px;"></div>
<div class="cb" style="left:1544.0px;top:626.4px;width:19.4px;height:19.3px;"></div>
<div style="left:1711px;top:563px;width:2.8px;height:182px;background:#858585;"></div>
<div class="btnd" style="left:1532px;top:915.5px;width:86.5px;height:29px;"></div>
<span class="t" style="left:1551.5px;top:921.2px;font-size:16px;line-height:16px;letter-spacing:0.241px;color:#8c8c8c;">Reset</span>
<div class="btnd" style="left:1631px;top:915.5px;width:83px;height:29px;"></div>
<span class="t" style="left:1651.5px;top:921.2px;font-size:16px;line-height:16px;letter-spacing:-0.005px;color:#8c8c8c;">Apply</span>
<svg style="left:0px;top:0px;pointer-events:none;" width="1743" height="1003" viewBox="0 0 1743 1003"><path d="M1574 587V611.500L1580.400 607.300L1584.600 614.800L1589.200 613L1586 607.100L1593 606.700Z" fill="#fff" stroke="#1c2230" stroke-width="1"/>
<g fill="none" stroke="#ff0000" stroke-width="8">
<rect x="1235" y="564.200" width="61.100" height="48" rx="3"/>
<rect x="1529" y="564.200" width="45" height="45.900" rx="3"/>
</g>
<path d="M961.960 829.360L1197 658.900L1185.100 653.500L1232.900 638.200L1203.300 679.400L1202.200 666.100L967.240 836.640Z" fill="#ff0000"/>
<path d="M1328.300 811.600L1483.900 657.100L1470.900 653.800L1515.800 631.100L1493.300 676.400L1489.800 663L1334.700 818Z" fill="#ff0000"/>
</svg>
</div></body></html>
